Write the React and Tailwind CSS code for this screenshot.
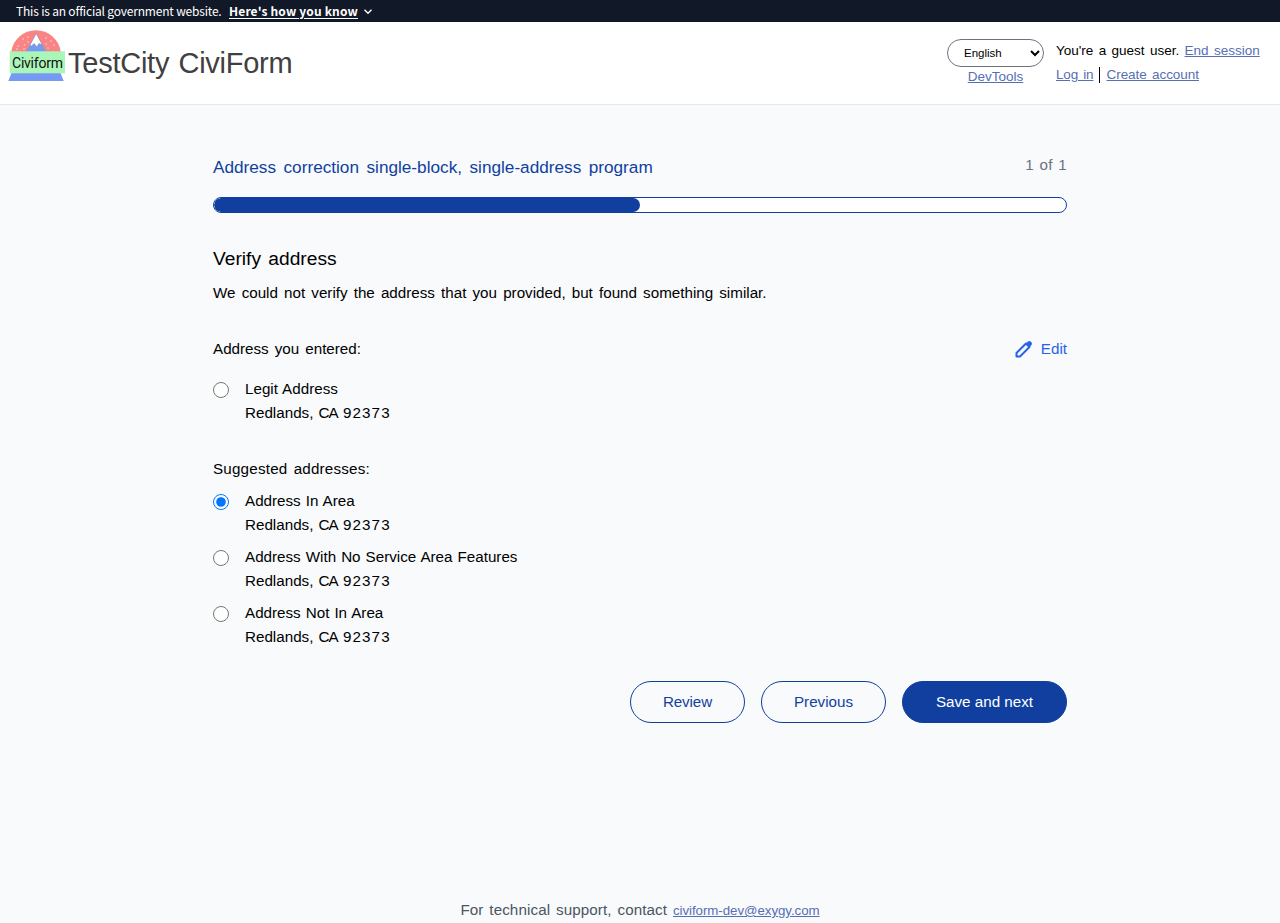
import React, { useState } from "react";

const link = "text-[#566fb5] underline underline-offset-1";

function Logo() {
  return (
    <svg width="58" height="52" viewBox="0 0 58 52" className="shrink-0">
      <path d="M3.200 22a25 25 0 0 1 49.600 0z" fill="#fa8383" />
      <path d="M28 3.500 38.500 22H17.800z" fill="#769af1" />
      <path d="M28.200 3.500 34.300 15 31 13.400 28.800 17 26.200 13.400 23.400 16 22 15z" fill="#fff" stroke="#6b7280" strokeWidth=".4" />
      <g fill="#ffd9d9">
        <circle cx="15" cy="9" r=".8" /><circle cx="20" cy="7" r=".8" />
        <circle cx="10" cy="16" r=".8" /><circle cx="16.500" cy="15" r=".8" />
        <circle cx="20" cy="12" r=".7" /><circle cx="9" cy="19" r=".8" />
        <circle cx="16" cy="19" r=".8" /><circle cx="38" cy="8" r=".8" />
        <circle cx="43" cy="11" r=".8" /><circle cx="38" cy="14" r=".8" />
        <circle cx="46" cy="15" r=".8" /><circle cx="40" cy="18" r=".8" />
      </g>
      <path d="M3.500 43h49l3.200 8H.300z" fill="#769af1" />
      <rect x="1.700" y="21.300" width="55.300" height="22" fill="#aaf5b8" />
      <text x="4" y="37.500" fontSize="14" textLength="51" fill="#111" fontFamily="Roboto, sans-serif">Civiform</text>
    </svg>
  );
}

function Address({ name, checked, onChange, id }) {
  return (
    <label className="flex items-start">
      <input type="radio" name="address" checked={checked} onChange={() => onChange(id)} className="mt-[5px] mr-4 size-4 shrink-0" />
      <span className="block leading-6 [word-spacing:0.8px]">
        {name}
        <br />
        Redlands, <span className="tracking-[-0.8px]">CA</span> <span className="tracking-[1.1px]">92373</span>
      </span>
    </label>
  );
}

export default function App() {
  const [selected, setSelected] = useState("in");
  return (
    <div className="flex h-[923px] flex-col overflow-hidden bg-[#f8fafc] font-['Liberation_Sans',Arial,sans-serif] text-[15.2px] text-black">
      <div className="flex h-[22px] shrink-0 items-center bg-[#111827] px-4 font-['Noto_Sans_CJK_SC',sans-serif] text-[12px] text-white">
        <span className="w-[205px] tracking-[-0.19px] whitespace-nowrap">This is an official government website.</span>
        <button className="ml-2 flex items-center gap-1 font-bold">
          <span className="tracking-[0.16px] underline underline-offset-2">Here's how you know</span>
          <svg width="12" height="12" viewBox="0 0 12 12" fill="none" stroke="currentColor" strokeWidth="1.400"><path d="m2.500 4.800 3.500 3.500 3.500-3.500" /></svg>
        </button>
      </div>

      <header className="flex h-[83px] shrink-0 border-b border-gray-200 bg-white">
        <a className="flex items-start pt-2 pl-2">
          <Logo />
          <span className="pt-[13px] pl-[2px] text-[29px] leading-10 tracking-[-0.25px] text-[#404040] [word-spacing:1.5px]">TestCity CiviForm</span>
        </a>
        <div className="ml-auto flex pr-5">
          <div className="mr-3 flex w-[97px] flex-col items-center pt-[17px]">
            <select className="h-7 w-full rounded-full border border-[#6b7280] bg-white pl-3 text-[11.5px]"><option>English</option></select>
            <a className={`${link} text-[13.5px] leading-5`}>DevTools</a>
          </div>
          <div className="w-[204px] pt-[17px] text-[13.5px] leading-6 whitespace-nowrap [word-spacing:1.6px]">
            <div>You're a guest user. <a className={link}>End session</a></div>
            <div className="flex items-center">
              <a className={`${link} tracking-[-0.15px]`}>Log in</a>
              <span className="mx-1.5 h-4 w-px bg-black" />
              <a className={`${link} tracking-[-0.05px]`}>Create account</a>
            </div>
          </div>
        </div>
      </header>

      <main className="mx-auto w-[854px] pt-12">
        <div className="flex justify-between">
          <h2 className="text-[17.2px] leading-7 text-[#113f9f] [word-spacing:2.7px]">Address correction single-block, single-address program</h2>
          <span className="leading-6 tracking-[0.3px] text-[#6b7280] [word-spacing:1px]">1 of 1</span>
        </div>
        <div className="mt-4 h-4 overflow-hidden rounded-full border border-[#113f9f] bg-white">
          <div className="h-full w-1/2 rounded-full bg-[#113f9f]" />
        </div>

        <h1 className="mt-8 text-[19.2px] leading-7 [word-spacing:2px]">Verify address</h1>
        <p className="mt-2 leading-6 [word-spacing:1.9px]">We could not verify the address that you provided, but found something similar.</p>

        <div className="mt-8 flex h-6 items-center justify-between">
          <span className="[word-spacing:1.8px]">Address you entered:</span>
          <button className="flex items-center gap-2 text-[#2563eb]">
            <svg width="20" height="20" viewBox="0 0 20 20" className="translate-x-px">
              <path d="M2.500 17.500V14L12 4.500 15.500 8 6 17.500z" fill="none" stroke="currentColor" strokeWidth="2" strokeLinejoin="round" />
              <path d="m11.500 5 2.500-2.500q1.300-1.100 2.600 0l.900.900q1.100 1.300 0 2.600L15 8.500z" fill="currentColor" />
            </svg>
            Edit
          </button>
        </div>
        <div className="mt-4">
          <Address id="entered" name="Legit Address" checked={selected === "entered"} onChange={setSelected} />
        </div>

        <div className="mt-8 leading-6 tracking-[0.2px] [word-spacing:1.8px]">Suggested addresses:</div>
        <div className="mt-2 flex flex-col gap-2">
          <Address id="in" name="Address In Area" checked={selected === "in"} onChange={setSelected} />
          <Address id="none" name="Address With No Service Area Features" checked={selected === "none"} onChange={setSelected} />
          <Address id="out" name="Address Not In Area" checked={selected === "out"} onChange={setSelected} />
        </div>

        <div className="mt-8 flex h-[42px] justify-end gap-4 [word-spacing:1px]">
          <button className="w-[115px] rounded-full border border-[#113f9f] tracking-[-0.1px] text-[#113f9f]">Review</button>
          <button className="w-[125px] rounded-full border border-[#113f9f] text-[#113f9f]">Previous</button>
          <button className="w-[165px] rounded-full border border-[#113f9f] bg-[#113f9f] text-white">Save and next</button>
        </div>
      </main>

      <footer className="mt-auto shrink-0 text-center leading-6 tracking-[0.1px] text-[#4b5563] [word-spacing:1.5px]">
        For technical support, contact <a className={`${link} text-[13.3px] tracking-[-0.05px]`}>civiform-dev@exygy.com</a>
      </footer>
    </div>
  );
}
